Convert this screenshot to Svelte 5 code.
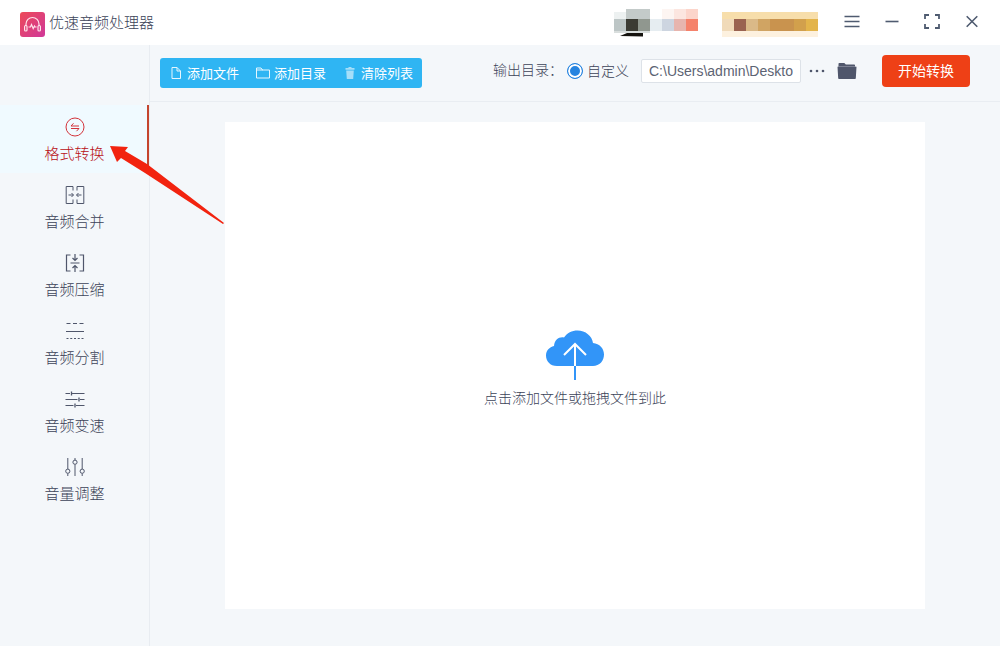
<script>
  let active = $state('convert');
  let outputMode = $state('custom');
  let outputPath = $state('C:\\Users\\admin\\Deskto');

  const tabs = [
    { id: 'convert', label: '格式转换' },
    { id: 'merge', label: '音频合并' },
    { id: 'compress', label: '音频压缩' },
    { id: 'split', label: '音频分割' },
    { id: 'speed', label: '音频变速' },
    { id: 'volume', label: '音量调整' }
  ];

  // colour blocks covering the account area: x, y, width, height, fill
  const userBlocks = [
    [0, 3, 12, 8, '#edf1f1'],
    [12, 0, 24, 10, '#c3cac9'],
    [0, 10, 12, 12, '#bdc6c6'],
    [12, 10, 12, 12, '#3b3b33'],
    [24, 10, 12, 12, '#90978f'],
    [36, 10, 12, 12, '#e6edf1'],
    [48, 10, 12, 12, '#cdd5e0'],
    [48, 0, 12, 10, '#fdf5f2'],
    [60, 0, 12, 10, '#fce6e0'],
    [72, 0, 12, 10, '#fcd5cb'],
    [60, 10, 12, 12, '#e7b5ae'],
    [72, 10, 12, 12, '#f5826b'],
    [0, 22, 36, 2, '#d9dedd']
  ];

  const vipBlocks = [
    [0, 3, 96, 7, '#f7deab'],
    [0, 10, 12, 12, '#f0dab9'],
    [12, 10, 12, 12, '#9a6250'],
    [24, 10, 12, 12, '#dab988'],
    [36, 10, 12, 12, '#d0a463'],
    [48, 10, 24, 12, '#c9934e'],
    [72, 10, 12, 12, '#d2a04c'],
    [84, 10, 12, 12, '#e3b44b'],
    [0, 22, 96, 6, '#fdf1df']
  ];
</script>

<div class="app">
  <header class="titlebar">
    <svg class="logo" viewBox="0 0 25 25" aria-hidden="true">
      <defs>
        <linearGradient id="logo-bg" x1="0" y1="0" x2="1" y2="1">
          <stop offset="0" stop-color="#ed4a58" />
          <stop offset="1" stop-color="#d0389a" />
        </linearGradient>
      </defs>
      <rect width="25" height="25" rx="3" fill="url(#logo-bg)" />
      <g fill="none" stroke="#ffe3ea" stroke-width="1.2">
        <path d="M6 14v-2a6.500 6.500 0 0 1 13 0v2" />
        <rect x="4.600" y="13.500" width="2.400" height="5.500" rx="1" />
        <rect x="18" y="13.500" width="2.400" height="5.500" rx="1" />
        <path d="M8.500 15h2l1-2.500 1.700 4 1.300-2.500 .6 1h1.500" />
      </g>
    </svg>
    <h1>优速音频处理器</h1>

    <div class="account">
      <svg width="84" height="28" viewBox="0 0 84 28" aria-hidden="true">
        {#each userBlocks as [x, y, width, height, fill]}
          <rect {x} {y} {width} {height} {fill} />
        {/each}
        <path d="M6 27l7-3h16v3.500z" fill="#15130f" />
      </svg>
      <svg width="98" height="28" viewBox="0 0 98 28" aria-hidden="true">
        {#each vipBlocks as [x, y, width, height, fill]}
          <rect {x} {y} {width} {height} {fill} />
        {/each}
      </svg>
    </div>

    <div class="window-buttons">
      <button type="button" aria-label="菜单">
        <svg viewBox="0 0 20 20"><path d="M2.500 3.500h15M2.500 8.500h15M2.500 13.500h15" /></svg>
      </button>
      <button type="button" aria-label="最小化">
        <svg viewBox="0 0 20 20"><path d="M3.500 8.500h13" /></svg>
      </button>
      <button type="button" aria-label="最大化">
        <svg viewBox="0 0 20 20"><path d="M3 6V2h4M13 2h4v4M17 11v4h-4M7 15H3v-4" stroke-width="1.800" /></svg>
      </button>
      <button type="button" aria-label="关闭">
        <svg viewBox="0 0 20 20"><path d="M4.700 3.200l10.600 10.600M15.300 3.200L4.700 13.800" /></svg>
      </button>
    </div>
  </header>

  <div class="body">
    <nav class="sidebar">
      {#each tabs as tab}
        <button type="button" class="tab" class:active={active === tab.id} onclick={() => (active = tab.id)}>
          <svg viewBox="0 0 20 20" aria-hidden="true">
            {#if tab.id === 'convert'}
              <circle cx="10" cy="10" r="9" />
              <path d="M14 9H6l2.500-2.700M6 11.500h8l-2.500 2.700" />
            {:else if tab.id === 'merge'}
              <path d="M8 5.500v-4H1.200v17H8v-4M12 5.500v-4h6.800v17H12v-4" />
              <path d="M3.500 10h4.800M6.500 8l2 2-2 2M16.500 10h-4.800M13.500 8l-2 2 2 2" />
            {:else if tab.id === 'compress'}
              <path d="M5.500 2H1.500v16h4M14.500 2h4v16h-4M5.500 10h9" stroke-width="1.200" />
              <path d="M10 1v6M7.500 5L10 7.500 12.500 5M10 19v-6M7.500 15l2.500-2.500 2.500 2.500" stroke-width="1.200" />
            {:else if tab.id === 'split'}
              <path d="M1.500 2.500h4M8 2.500h4M14.500 2.500h4" />
              <path d="M1 10.500h18" />
              <path d="M1.500 17.500h17" stroke-dasharray="2 1.750" />
            {:else if tab.id === 'speed'}
              <path d="M.5 4.500H5M7 4.500h12.500M.5 10.500h12M15 10.500h4.500M.5 16.500h8M11 16.500h8.500" />
              <path d="M6.500 2.500v4M14 8.500v4M10 14.500v4" stroke-width="1.300" />
            {:else}
              <path d="M2.800 1v11M2.800 16.500V19M10 1v2M10 7.500V19M17.200 1v11M17.200 16.500V19" />
              <circle cx="2.800" cy="14.200" r="2.100" />
              <circle cx="10" cy="5.200" r="2.100" />
              <circle cx="17.200" cy="14.200" r="2.100" />
            {/if}
          </svg>
          <span>{tab.label}</span>
        </button>
      {/each}
      <svg class="pointer" viewBox="0 0 114 79" aria-hidden="true">
        <path d="M0 1l18 1-3 4 22 13L114 78l-1 1L35 28 11 13l-4 4z" fill="#f2230f" />
      </svg>
    </nav>

    <main>
      <div class="toolbar">
        <div class="file-actions">
          <button type="button">
            <svg viewBox="0 0 14 14" width="14" height="14" aria-hidden="true"><path d="M3 1.500h5L11.500 5v7.500H3zM8 1.500V5h3.500" /></svg>
            添加文件
          </button>
          <button type="button">
            <svg viewBox="0 0 14 14" width="14" height="14" aria-hidden="true"><path d="M.5 12V2h4.500l1.500 2h7v8zM.5 4H7" /></svg>
            添加目录
          </button>
          <button type="button">
            <svg class="trash" viewBox="0 0 14 14" width="14" height="14" aria-hidden="true"><path d="M5.500 2V1h3v1H11.500v1.800h-9V2zM3.200 4.500h7.600L10.200 13H3.800z" /></svg>
            清除列表
          </button>
        </div>

        <div class="output">
          <span class="caption">输出目录：</span>
          <label class="mode">
            <input type="radio" name="output" value="custom" bind:group={outputMode} />
            自定义
          </label>
          <input class="path" type="text" aria-label="输出目录" bind:value={outputPath} />
          <button type="button" class="plain" aria-label="更多">
            <svg viewBox="0 0 16 16" width="16" height="16"><circle cx="2" cy="8" r="1.300" /><circle cx="8" cy="8" r="1.300" /><circle cx="14" cy="8" r="1.300" /></svg>
          </button>
          <button type="button" class="plain folder" aria-label="打开目录">
            <svg viewBox="0 0 20 18" width="20" height="18"><path d="M1.500 5V1.800q0-.8 .8-.8h5l1.500 1.500h8.400q.8 0 .8 .8V5z" /><path d="M.5 4.800h19L18.800 16.200q0 .8-.8 .8H2q-.8 0-.8-.8z" /><path d="M1.500 4.500h17" stroke="#9aa0ae" stroke-width=".6" /></svg>
          </button>
        </div>

        <button type="button" class="start">开始转换</button>
      </div>

      <div class="workspace">
        <button type="button" class="dropzone">
          <svg viewBox="0 0 60 52" width="60" height="52" aria-hidden="true">
            <path d="M12 37C5 37 1 32 1 26.500c0-5 3.500-8.500 8-9.500C9.500 11 14 7.500 19 8.500 22 4 27 1.500 32.500 1.500c8 0 14.500 5.500 15.500 12.500C54.500 14.500 59 19.500 59 25.500 59 32 54.500 37 48 37z" fill="#3295f8" />
            <path d="M30 37v14" stroke="#3295f8" stroke-width="2" />
            <path d="M30 37V15M19 26L30 15l11 11" fill="none" stroke="#fff" stroke-width="2" />
          </svg>
          <span>点击添加文件或拖拽文件到此</span>
        </button>
      </div>
    </main>
  </div>
</div>

<style>
  :global(body) {
    background: #f4f7fa;
  }

  .app {
    display: flex;
    flex-direction: column;
    min-height: 100vh;
    color: #3c4358;
    font-family: "Liberation Sans", "Noto Sans CJK SC", sans-serif;
    font-size: 14px;
    font-weight: 300;
  }

  button {
    padding: 0;
    border: 0;
    background: none;
    color: inherit;
    font: inherit;
    cursor: pointer;
  }

  svg {
    display: block;
    flex: none;
  }

  /* Title bar */
  .titlebar {
    display: flex;
    align-items: center;
    height: 45px;
    padding: 0 18px 0 20px;
    background: #fff;
    box-sizing: border-box;
  }

  .logo {
    width: 25px;
    height: 25px;
    margin: 4px 4px 0 0;
  }

  h1 {
    margin: 0;
    font-size: 15px;
    font-weight: 300;
    line-height: 24px;
  }

  .account {
    display: flex;
    gap: 24px;
    margin-left: auto;
  }

  .window-buttons {
    display: flex;
    gap: 20px;
    margin-left: 22px;
  }

  .window-buttons svg {
    width: 20px;
    height: 20px;
    fill: none;
    stroke: #4f5b70;
    stroke-width: 1.6;
  }

  .body {
    display: flex;
    flex: 1;
  }

  /* Sidebar */
  .sidebar {
    position: relative;
    flex: none;
    width: 150px;
    padding-top: 60px;
    border-right: 1px solid #e8ecf1;
    box-sizing: border-box;
  }

  .tab {
    display: flex;
    flex-direction: column;
    align-items: center;
    gap: 5px;
    width: 100%;
    height: 68px;
    padding-top: 12px;
    font-size: 15px;
    line-height: 24px;
  }

  .tab svg {
    width: 20px;
    height: 20px;
    fill: none;
    stroke: #4f566b;
    stroke-width: 1;
  }

  .tab.active {
    background: #f0faff;
    box-shadow: inset -2px 0 #c4452f;
    color: #b80f16;
  }

  .tab.active svg {
    stroke: #d3333a;
  }

  .pointer {
    position: absolute;
    top: 100px;
    left: 110px;
    width: 114px;
    height: 79px;
    z-index: 2;
    pointer-events: none;
  }

  main {
    display: flex;
    flex: 1;
    flex-direction: column;
    min-width: 0;
  }

  /* Toolbar */
  .toolbar {
    display: flex;
    align-items: center;
    height: 57px;
    padding: 0 30px 4px 10px;
    border-bottom: 1px solid #e9edf2;
    box-sizing: border-box;
  }

  .file-actions {
    display: flex;
    gap: 17px;
    height: 30px;
    margin-top: 3px;
    padding: 0 9px;
    border-radius: 3px;
    background: #2fb5f3;
    color: #fff;
    font-size: 13px;
    font-weight: 400;
  }

  .file-actions button {
    display: flex;
    align-items: center;
    gap: 4px;
    white-space: nowrap;
  }

  .file-actions svg {
    fill: none;
    stroke: #e6f6fe;
    stroke-width: 1;
  }

  .file-actions .trash {
    fill: #a5def9;
    stroke: none;
  }

  .output {
    display: flex;
    align-items: center;
    margin-left: auto;
    line-height: 20px;
    white-space: nowrap;
  }

  .caption {
    margin-right: 4px;
    padding-bottom: 2px;
  }

  .mode {
    display: flex;
    align-items: center;
    gap: 4px;
  }

  .mode input {
    width: 16px;
    height: 16px;
    margin: 0;
    border: 1px solid #2684e0;
    border-radius: 50%;
    background: #2684e0;
    box-shadow: inset 0 0 0 2px #fff;
    appearance: none;
  }

  .path {
    width: 160px;
    height: 24px;
    margin: 0 8px 0 12px;
    padding: 0 7px;
    border: 1px solid #dde2e8;
    border-radius: 2px;
    background: #fff;
    box-sizing: border-box;
    color: #5c6373;
    font: inherit;
  }

  .plain {
    fill: #4f566b;
  }

  .folder {
    margin-left: 12px;
  }

  .start {
    width: 88px;
    height: 32px;
    margin-left: 25px;
    border-radius: 4px;
    background: #ee4016;
    color: #fff;
    font-weight: 400;
    line-height: 30px;
  }

  /* Drop area */
  .workspace {
    display: flex;
    flex: 1;
    padding: 20px 75px 37px;
  }

  .dropzone {
    display: flex;
    flex: 1;
    flex-direction: column;
    align-items: center;
    justify-content: center;
    gap: 7px;
    padding-top: 5px;
    background: #fff;
    font-size: 14px;
    line-height: 20px;
  }
</style>
